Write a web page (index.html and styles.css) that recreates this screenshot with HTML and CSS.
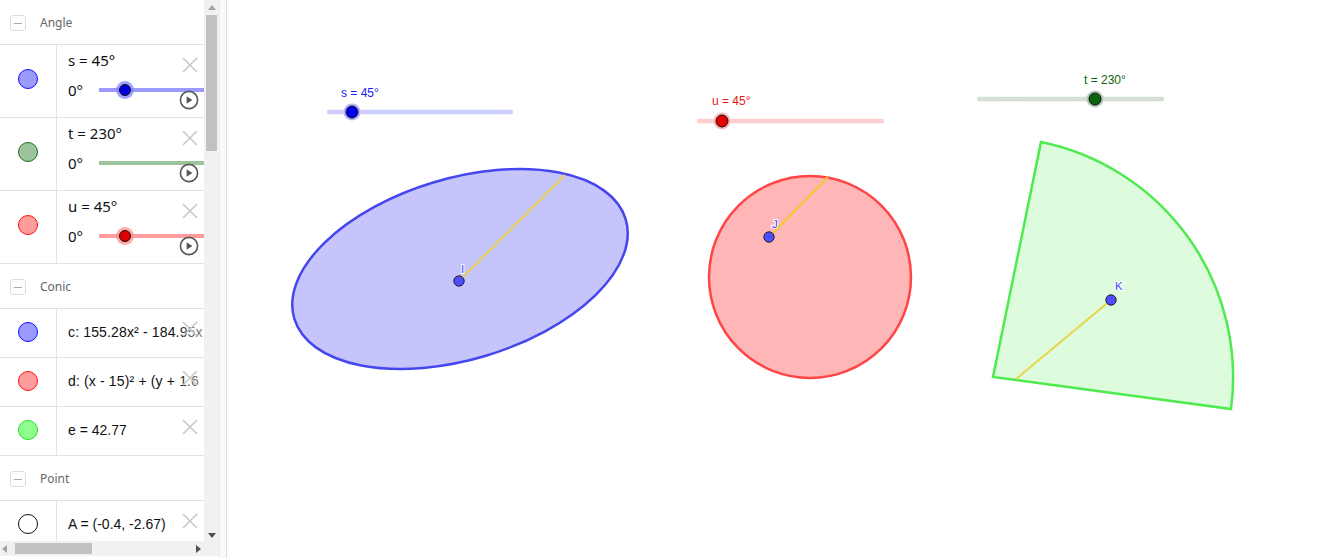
FILE: index.html
```html
<!DOCTYPE html>
<html>
<head>
<meta charset="utf-8">
<link rel="stylesheet" href="styles.css">
</head>
<body>
<div class="app">
  <aside class="sidebar">
    <div class="list">
      <div class="group"><span class="toggle"></span><span class="group-name">Angle</span></div>

      <div class="item slider">
        <div class="marble-col"><span class="marble m-blue"></span></div>
        <div class="content">
          <div class="def">s = 45°</div>
          <div class="slider-line"><span class="min">0°</span><div class="track t-blue"><span class="knob k-blue" style="left:26px"></span></div></div>
          <svg class="del" viewBox="0 0 16 16"><path d="M1 1L15 15M15 1L1 15"/></svg>
          <svg class="play" viewBox="0 0 20 20"><circle cx="10" cy="10" r="8.6"/><path d="M7.6 6.2L13.4 10L7.6 13.8Z"/></svg>
        </div>
      </div>

      <div class="item slider">
        <div class="marble-col"><span class="marble m-green"></span></div>
        <div class="content">
          <div class="def">t = 230°</div>
          <div class="slider-line"><span class="min">0°</span><div class="track t-green"></div></div>
          <svg class="del" viewBox="0 0 16 16"><path d="M1 1L15 15M15 1L1 15"/></svg>
          <svg class="play" viewBox="0 0 20 20"><circle cx="10" cy="10" r="8.6"/><path d="M7.6 6.2L13.4 10L7.6 13.8Z"/></svg>
        </div>
      </div>

      <div class="item slider">
        <div class="marble-col"><span class="marble m-red"></span></div>
        <div class="content">
          <div class="def">u = 45°</div>
          <div class="slider-line"><span class="min">0°</span><div class="track t-red"><span class="knob k-red" style="left:26px"></span></div></div>
          <svg class="del" viewBox="0 0 16 16"><path d="M1 1L15 15M15 1L1 15"/></svg>
          <svg class="play" viewBox="0 0 20 20"><circle cx="10" cy="10" r="8.6"/><path d="M7.6 6.2L13.4 10L7.6 13.8Z"/></svg>
        </div>
      </div>

      <div class="group"><span class="toggle"></span><span class="group-name">Conic</span></div>

      <div class="item simple">
        <div class="marble-col"><span class="marble m-blue"></span></div>
        <div class="content">
          <span class="def wide">c: 155.28x² - 184.95x y</span>
          <span class="fade"></span>
          <svg class="del" viewBox="0 0 16 16"><path d="M1 1L15 15M15 1L1 15"/></svg>
        </div>
      </div>

      <div class="item simple">
        <div class="marble-col"><span class="marble m-red"></span></div>
        <div class="content">
          <span class="def wide">d: (x - 15)² + (y + 1.6</span>
          <span class="fade"></span>
          <svg class="del" viewBox="0 0 16 16"><path d="M1 1L15 15M15 1L1 15"/></svg>
        </div>
      </div>

      <div class="item simple">
        <div class="marble-col"><span class="marble m-lime"></span></div>
        <div class="content">
          <span class="def">e = 42.77</span>
          <svg class="del" viewBox="0 0 16 16"><path d="M1 1L15 15M15 1L1 15"/></svg>
        </div>
      </div>

      <div class="group"><span class="toggle"></span><span class="group-name">Point</span></div>

      <div class="item simple">
        <div class="marble-col"><span class="marble m-white"></span></div>
        <div class="content">
          <span class="def">A = (-0.4, -2.67)</span>
          <svg class="del" viewBox="0 0 16 16"><path d="M1 1L15 15M15 1L1 15"/></svg>
        </div>
      </div>
    </div>

    <div class="vscroll">
      <span class="arrow-up"></span>
      <span class="vthumb"></span>
      <span class="vspace"></span>
      <span class="arrow-down"></span>
    </div>
    <div class="hscroll">
      <span class="arrow-left"></span>
      <span class="hthumb"></span>
      <span class="hspace"></span>
      <span class="arrow-right"></span>
    </div>
    <div class="corner"></div>
    <div class="divider"></div>
  </aside>

  <main class="canvas">
    <svg class="graphics" viewBox="227 0 1109 558" xmlns="http://www.w3.org/2000/svg">
      <!-- sliders -->
      <text class="slabel" x="341" y="97" fill="#1c1cf0">s = 45°</text>
      <line x1="329" y1="112" x2="511" y2="112" stroke="#cfcffb" stroke-width="4.5" stroke-linecap="round"/>
      <circle cx="352" cy="112" r="8.5" fill="#b4b4f4"/>
      <circle cx="352" cy="112" r="6" fill="#0000f0" stroke="#111" stroke-width="1"/>

      <text class="slabel" x="712" y="105" fill="#e81818">u = 45°</text>
      <line x1="699" y1="121" x2="882" y2="121" stroke="#ffcfcf" stroke-width="4.5" stroke-linecap="round"/>
      <circle cx="722" cy="121" r="8.5" fill="#f6bcbc"/>
      <circle cx="722" cy="121" r="6" fill="#e80000" stroke="#111" stroke-width="1"/>

      <text class="slabel" x="1084" y="84" fill="#0c640c">t = 230°</text>
      <line x1="979" y1="99" x2="1162" y2="99" stroke="#d2dfd2" stroke-width="4.5" stroke-linecap="round"/>
      <line x1="981" y1="99" x2="1160" y2="99" stroke="#e8f1e8" stroke-width="1.2" stroke-dasharray="1.2 2.6"/>
      <circle cx="1095" cy="99" r="8.5" fill="#bcc8bc"/>
      <circle cx="1095" cy="99" r="6" fill="#0a640a" stroke="#111" stroke-width="1"/>

      <!-- ellipse -->
      <ellipse cx="460" cy="269" rx="173" ry="90.5" transform="rotate(-16.7 460 269)" fill="#c5c5fc" stroke="#4646ee" stroke-width="2.5"/>
      <line x1="459" y1="281" x2="565" y2="175" stroke="#ead04a" stroke-width="2"/>
      <circle cx="459" cy="281" r="5.2" fill="#4d4dff" stroke="#222" stroke-width="1"/>
      <text class="plabel" x="461" y="273">I</text>

      <!-- circle -->
      <circle cx="810" cy="277" r="101" fill="#ffb6b6" stroke="#ff4545" stroke-width="2.5"/>
      <line x1="769" y1="237" x2="828" y2="177" stroke="#f8c830" stroke-width="2"/>
      <circle cx="769" cy="237" r="5.2" fill="#4d4dff" stroke="#222" stroke-width="1"/>
      <text class="plabel" x="772" y="228">J</text>

      <!-- sector -->
      <path d="M993 377 L1041 142 A240 240 0 0 1 1231 409 Z" fill="#ddfcdd" stroke="#4eea4e" stroke-width="2.5" stroke-linejoin="miter"/>
      <line x1="1111" y1="300" x2="1016" y2="379" stroke="#ead34a" stroke-width="2"/>
      <circle cx="1111" cy="300" r="5.2" fill="#4d4dff" stroke="#222" stroke-width="1"/>
      <text class="plabel" x="1115" y="290">K</text>
    </svg>
  </main>
</div>
</body>
</html>
```

FILE: styles.css
```css
html, body {
  margin: 0;
  padding: 0;
  background: #fff;
  overflow: hidden;
}

body {
  font-family: "Noto Sans", "DejaVu Sans", sans-serif;
  color: #111;
}

.app {
  display: flex;
  width: 1336px;
  height: 558px;
}

/* ---------- sidebar ---------- */
.sidebar {
  flex: none;
  display: grid;
  grid-template-columns: 204px 15px 8px;
  grid-template-rows: 541px 15px 2px;
}

.list {
  grid-column: 1;
  grid-row: 1;
  overflow: hidden;
}

.group {
  height: 44px;
  border-bottom: 1px solid #e2e2e2;
  display: flex;
  align-items: center;
  padding-left: 10px;
}

.toggle {
  width: 16px;
  height: 16px;
  box-sizing: border-box;
  border: 1px solid #dcdcdc;
  border-radius: 3px;
  display: flex;
  align-items: center;
  justify-content: center;
  margin-top: 2px;
}

.toggle::before {
  content: "";
  width: 8px;
  height: 1px;
  background: #a8a8a8;
}

.group-name {
  margin-left: 14px;
  font-size: 12px;
  color: #666;
}

.item {
  display: flex;
  border-bottom: 1px solid #e2e2e2;
}

.item.slider {
  height: 72px;
}

.item.simple {
  height: 48px;
}

.marble-col {
  flex: none;
  width: 56px;
  border-right: 1px solid #e2e2e2;
  display: flex;
  align-items: center;
  justify-content: center;
}

.slider .marble-col {
  padding-bottom: 5px;
}

.simple .marble-col {
  padding-bottom: 2px;
}

.marble {
  width: 20px;
  height: 20px;
  box-sizing: border-box;
  border-radius: 50%;
  border: 1px solid;
}

.m-blue { background: #9a9aff; border-color: #1010ff; }
.m-green { background: #9bc49b; border-color: #1e6e1e; }
.m-red { background: #ff9c9c; border-color: #ff1010; }
.m-lime { background: #8eff8e; border-color: #22dd22; }
.m-white { background: #fff; border-color: #111; }

.content {
  flex: 1;
  position: relative;
  overflow: hidden;
  padding-left: 11px;
  white-space: nowrap;
}

.slider .def {
  height: 30px;
  line-height: 30px;
  font-size: 15px;
}

.slider-line {
  height: 30px;
  display: flex;
  align-items: center;
  font-size: 15px;
}

.min {
  flex: none;
  width: 31px;
}

.track {
  flex: 1;
  height: 4px;
  position: relative;
}

.t-blue { background: #9a9aff; }
.t-green { background: #9bc49b; }
.t-red { background: #ff9c9c; }

.knob {
  position: absolute;
  top: 50%;
  width: 12px;
  height: 12px;
  box-sizing: border-box;
  border-radius: 50%;
  border: 1px solid #111;
  transform: translate(-50%, -50%);
}

.k-blue { background: #0000dd; box-shadow: 0 0 0 3px rgba(130, 130, 255, 0.75); }
.k-red { background: #e00000; box-shadow: 0 0 0 3px rgba(255, 140, 140, 0.75); }

.simple .content {
  display: flex;
  align-items: center;
  padding-bottom: 2px;
  font-family: "Liberation Sans", Arial, sans-serif;
  font-size: 14px;
}

.def.wide {
  letter-spacing: 0.15px;
}

.fade {
  position: absolute;
  top: 0;
  bottom: 0;
  right: 0;
  width: 30px;
  background: linear-gradient(to right, rgba(255, 255, 255, 0), rgba(255, 255, 255, 0.5));
}

.del {
  position: absolute;
  right: 6px;
  top: 12px;
  width: 16px;
  height: 16px;
  fill: none;
  stroke: #c6cbc6;
  stroke-width: 1.6;
}

.play {
  position: absolute;
  right: 5px;
  top: 45px;
  width: 20px;
  height: 20px;
}

.play circle {
  fill: #fff;
  stroke: #575757;
  stroke-width: 1.6;
}

.play path {
  fill: #575757;
}

/* scrollbars */
.vscroll {
  grid-column: 2;
  grid-row: 1;
  background: #f1f1f1;
  display: flex;
  flex-direction: column;
  align-items: center;
}

.arrow-up,
.arrow-down {
  flex: none;
  width: 15px;
  height: 15px;
  display: flex;
  align-items: center;
  justify-content: center;
}

.arrow-up::before {
  content: "";
  border-left: 4px solid transparent;
  border-right: 4px solid transparent;
  border-bottom: 5px solid #a3a3a3;
  margin-top: -1px;
}

.arrow-down::before {
  content: "";
  border-left: 4px solid transparent;
  border-right: 4px solid transparent;
  border-top: 5px solid #505050;
  margin-top: 3px;
}

.vthumb {
  flex: none;
  width: 11px;
  height: 136px;
  background: #c1c1c1;
}

.vspace {
  flex: 1;
}

.hscroll {
  grid-column: 1;
  grid-row: 2;
  background: #f1f1f1;
  display: flex;
  align-items: center;
}

.arrow-left,
.arrow-right {
  flex: none;
  width: 14px;
  height: 15px;
  display: flex;
  align-items: center;
  justify-content: center;
}

.arrow-left::before {
  content: "";
  border-top: 4px solid transparent;
  border-bottom: 4px solid transparent;
  border-right: 5px solid #a3a3a3;
  margin-left: -5px;
}

.arrow-right::before {
  content: "";
  border-top: 4px solid transparent;
  border-bottom: 4px solid transparent;
  border-left: 5px solid #505050;
  margin-left: 2px;
}

.hthumb {
  flex: none;
  width: 77px;
  height: 11px;
  margin-left: 1px;
  background: #c1c1c1;
}

.hspace {
  flex: 1;
}

.corner {
  grid-column: 2;
  grid-row: 2;
  background: #f1f1f1;
}

.divider {
  grid-column: 3;
  grid-row: 1 / span 3;
  box-sizing: border-box;
  background: #fafafa;
  border-left: 1px solid #ececec;
  border-right: 1px solid #dedede;
}

/* ---------- canvas ---------- */
.canvas {
  flex: 1;
  position: relative;
  background: #fff;
}

.graphics {
  display: block;
  width: 1109px;
  height: 558px;
}

.slabel {
  font-family: "Liberation Sans", Arial, sans-serif;
  font-size: 12px;
}

.plabel {
  font-family: "Liberation Sans", Arial, sans-serif;
  font-size: 11.5px;
  fill: #4444ff;
  stroke: #fff;
  stroke-width: 2px;
  paint-order: stroke;
}
```
